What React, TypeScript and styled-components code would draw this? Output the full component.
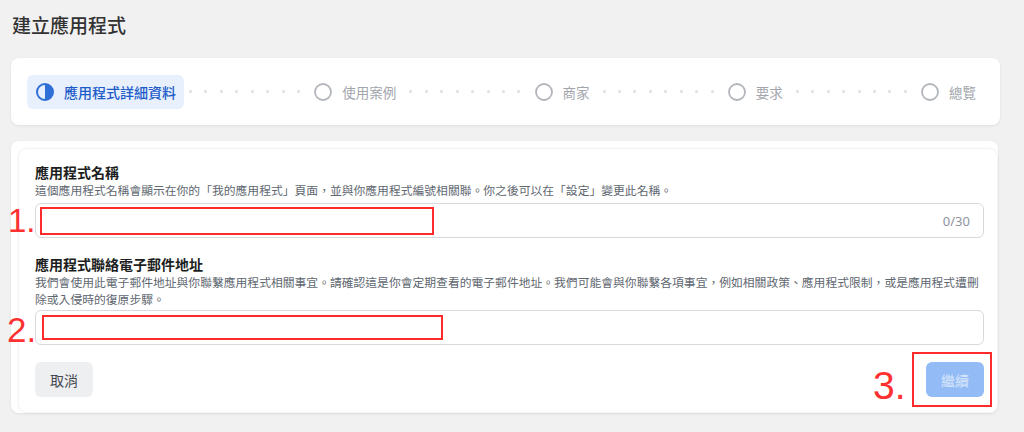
import styled, { createGlobalStyle } from 'styled-components';

const GlobalStyle = createGlobalStyle`
  html, body {
    margin: 0;
    padding: 0;
    background-color: #f1f1f1;
  }
  body {
    font-family: 'Noto Sans CJK TC', 'Noto Sans', sans-serif;
    color: #1c1e21;
  }
  * {
    box-sizing: border-box;
  }
`;

const Page = styled.div`
  width: 1024px;
  height: 432px;
  padding: 13px 24px 0 11px;
  overflow: hidden;
`;

const Title = styled.h1`
  margin: 0 0 0 1px;
  font-size: 19px;
  line-height: 24px;
  font-weight: 500;
  color: #333;
`;

const StepperCard = styled.div`
  margin-top: 21px;
  width: 989px;
  height: 67px;
  background-color: #fff;
  border-radius: 8px;
  box-shadow: 0 1px 3px rgba(0, 0, 0, 0.08);
  padding: 16px;
  display: flex;
  align-items: center;
`;

const Step = styled.div<{ $active?: boolean }>`
  display: flex;
  align-items: center;
  gap: 9px;
  height: 34px;
  padding: 0 8px 0 9px;
  border-radius: 6px;
  background-color: ${({ $active }) => ($active ? '#e7f0fc' : 'transparent')};
  color: ${({ $active }) => ($active ? '#1d5bc9' : '#a2a6ac')};
  font-size: ${({ $active }) => ($active ? '14px' : '13.5px')};
  font-weight: ${({ $active }) => ($active ? 500 : 400)};
  white-space: nowrap;
  flex-shrink: 0;
`;

const StepLabel = styled.span`
  margin-left: 1px;
`;

const Connector = styled.div`
  flex: 1;
  display: flex;
  justify-content: space-between;
  align-items: center;
  padding: 0 5px;
`;

const Dot = styled.span`
  width: 3px;
  height: 3px;
  border-radius: 50%;
  background-color: #dcdee2;
`;

const OuterCard = styled.div`
  position: relative;
  margin-top: 16px;
  width: 987px;
  height: 272px;
  background-color: #fff;
  border-radius: 8px;
  box-shadow: 0 1px 3px rgba(0, 0, 0, 0.07);
  padding: 8px 1px 1px 8px;
  display: flex;
`;

const FormCard = styled.div`
  flex: 1;
  background-color: #fff;
  border-radius: 8px;
  box-shadow: 0 0 3px rgba(0, 0, 0, 0.12);
  padding: 14px 13px 14px 16px;
  display: flex;
  flex-direction: column;
`;

const Field = styled.div<{ $spaced?: boolean }>`
  display: flex;
  flex-direction: column;
  margin-top: ${({ $spaced }) => ($spaced ? '17px' : '0')};
`;

const Label = styled.div`
  font-size: 14px;
  line-height: 18px;
  font-weight: 600;
  color: #1c1e21;
`;

const Description = styled.div`
  font-size: 11.8px;
  line-height: 17px;
  color: #606770;
`;

const InputBox = styled.div<{ $gap: number }>`
  margin-top: ${({ $gap }) => $gap}px;
  height: 35px;
  border: 1px solid #d6d9dd;
  border-radius: 6px;
  background-color: #fff;
  display: flex;
  align-items: center;
  justify-content: flex-end;
  padding-right: 13px;
`;

const Counter = styled.span`
  font-size: 13px;
  color: #8d949e;
  font-family: 'Noto Sans', sans-serif;
`;

const Actions = styled.div`
  margin-top: 17px;
  display: flex;
  justify-content: space-between;
`;

const Button = styled.button<{ $primary?: boolean }>`
  height: 35px;
  width: 58px;
  border: none;
  border-radius: 6px;
  font-family: inherit;
  font-size: 14px;
  font-weight: 400;
  background-color: ${({ $primary }) => ($primary ? '#93bbf5' : '#eeeff1')};
  color: ${({ $primary }) => ($primary ? '#d8e6fb' : '#444950')};
  cursor: pointer;
`;

const Marker = styled.div<{ $x: number; $y: number; $w: number; $h: number }>`
  position: absolute;
  left: ${({ $x }) => $x}px;
  top: ${({ $y }) => $y}px;
  width: ${({ $w }) => $w}px;
  height: ${({ $h }) => $h}px;
  border: 2px solid #ff2a2a;
  pointer-events: none;
`;

const MarkerNumber = styled.span<{ $x: number; $y: number; $size: number }>`
  position: absolute;
  left: ${({ $x }) => $x}px;
  top: ${({ $y }) => $y}px;
  font-family: 'Liberation Sans', Arial, sans-serif;
  font-size: ${({ $size }) => $size}px;
  line-height: 1;
  color: #ff3030;
  pointer-events: none;
`;

const HalfCircleIcon = () => (
  <svg width="18" height="18" viewBox="0 0 18 18">
    <circle cx="9" cy="9" r="8" fill="none" stroke="#2f6fd8" strokeWidth="2" />
    <path d="M9 1 A8 8 0 0 1 9 17 Z" fill="#2f6fd8" />
  </svg>
);

const EmptyCircleIcon = () => (
  <svg width="18" height="18" viewBox="0 0 18 18">
    <circle cx="9" cy="9" r="8" fill="none" stroke="#b3b6bb" strokeWidth="1.8" />
  </svg>
);

const steps = ['應用程式詳細資料', '使用案例', '商家', '要求', '總覽'];

const Dots = () => (
  <Connector>
    {Array.from({ length: 8 }).map((_, i) => (
      <Dot key={i} />
    ))}
  </Connector>
);

export default function App() {
  return (
    <Page>
      <GlobalStyle />
      <Title>建立應用程式</Title>
      <StepperCard>
        {steps.map((label, i) => (
          <>
            {i > 0 && <Dots key={`d${i}`} />}
            <Step key={label} $active={i === 0}>
              {i === 0 ? <HalfCircleIcon /> : <EmptyCircleIcon />}
              <StepLabel>{label}</StepLabel>
            </Step>
          </>
        ))}
      </StepperCard>
      <OuterCard>
        <FormCard>
          <Field>
            <Label>應用程式名稱</Label>
            <Description>
              這個應用程式名稱會顯示在你的「我的應用程式」頁面，並與你應用程式編號相關聯。你之後可以在「設定」變更此名稱。
            </Description>
            <InputBox $gap={5}>
              <Counter>0/30</Counter>
            </InputBox>
          </Field>
          <Field $spaced>
            <Label>應用程式聯絡電子郵件地址</Label>
            <Description>
              我們會使用此電子郵件地址與你聯繫應用程式相關事宜。請確認這是你會定期查看的電子郵件地址。我們可能會與你聯繫各項事宜，例如相關政策、應用程式限制，或是應用程式遭刪除或入侵時的復原步驟。
            </Description>
            <InputBox $gap={3} />
          </Field>
          <Actions>
            <Button>取消</Button>
            <Button $primary>繼續</Button>
          </Actions>
        </FormCard>
        <Marker $x={29} $y={66} $w={394} $h={28} />
        <MarkerNumber $x={-3} $y={63} $size={33}>1.</MarkerNumber>
        <Marker $x={31} $y={174} $w={401} $h={25} />
        <MarkerNumber $x={-4} $y={171} $size={35}>2.</MarkerNumber>
        <Marker $x={901} $y={211} $w={80} $h={55} />
        <MarkerNumber $x={862} $y={225} $size={39}>3.</MarkerNumber>
      </OuterCard>
    </Page>
  );
}
